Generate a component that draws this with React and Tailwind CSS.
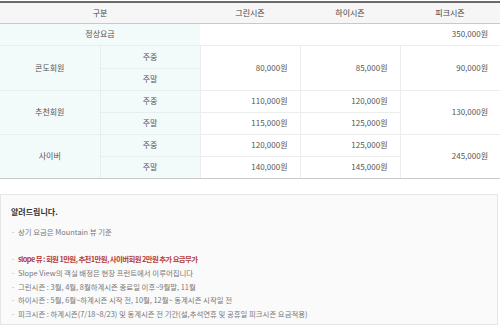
import React from 'react';

const font = { fontFamily: '"Noto Sans CJK KR", "Noto Sans", sans-serif' };

function PriceTable() {
  const th = 'font-normal text-[#444] text-[8px] text-center';
  const label = 'bg-[#f3fafa] text-center text-[#555] text-[8px] border-b border-[#e8eeee]';
  const sub = 'bg-[#f3fafa] text-center text-[#555] text-[8px] border-b border-l border-[#e6eeee]';
  const num = 'text-right pr-[12px] text-[#555] text-[8px] border-b border-l border-[#ececec]';

  return (
    <div className="pt-px">
      <table className="w-[500px] table-fixed border-collapse">
        <colgroup>
          <col className="w-[100px]" />
          <col className="w-[100px]" />
          <col className="w-[100px]" />
          <col className="w-[100px]" />
          <col className="w-[100px]" />
        </colgroup>
        <thead>
          <tr className="h-[21px] bg-[#f6f6f6] border-t-2 border-t-[#6b6b6b] border-b border-b-[#c9c9c9]">
            <th colSpan={2} className={th}>구분</th>
            <th className={th}>그린시즌</th>
            <th className={th}>하이시즌</th>
            <th className={th}>피크시즌</th>
          </tr>
        </thead>
        <tbody>
          <tr className="h-[22px]">
            <td colSpan={2} className={label}>정상요금</td>
            <td colSpan={3} className="text-right pr-[12px] text-[#555] text-[8px] border-b border-[#ececec]">350,000원</td>
          </tr>
          <tr className="h-[23px]">
            <td rowSpan={2} className={label}>콘도회원</td>
            <td className={sub}>주중</td>
            <td rowSpan={2} className={num}>80,000원</td>
            <td rowSpan={2} className={num}>85,000원</td>
            <td rowSpan={2} className={num}>90,000원</td>
          </tr>
          <tr className="h-[22px]">
            <td className={sub}>주말</td>
          </tr>
          <tr className="h-[22px]">
            <td rowSpan={2} className={label}>추천회원</td>
            <td className={sub}>주중</td>
            <td className={num}>110,000원</td>
            <td className={num}>120,000원</td>
            <td rowSpan={2} className={num}>130,000원</td>
          </tr>
          <tr className="h-[22px]">
            <td className={sub}>주말</td>
            <td className={num}>115,000원</td>
            <td className={num}>125,000원</td>
          </tr>
          <tr className="h-[22px]">
            <td rowSpan={2} className={label + ' border-b-[#c9c9c9]'}>사이버</td>
            <td className={sub}>주중</td>
            <td className={num}>120,000원</td>
            <td className={num}>125,000원</td>
            <td rowSpan={2} className={num + ' border-b-[#c9c9c9]'}>245,000원</td>
          </tr>
          <tr className="h-[22px]">
            <td className={sub + ' border-b-[#c9c9c9]'}>주말</td>
            <td className={num + ' border-b-[#c9c9c9]'}>140,000원</td>
            <td className={num + ' border-b-[#c9c9c9]'}>145,000원</td>
          </tr>
        </tbody>
      </table>
    </div>
  );
}

function Notice() {
  const items = [
    { text: '상기 요금은 Mountain 뷰 기준' },
    { text: '', blank: true },
    { text: 'slope 뷰 : 회원 1만원, 추천1만원, 사이버회원 2만원 추가 요금부가', red: true },
    { text: 'Slope View의 객실 배정은 현장 프런트에서 이루어집니다' },
    { text: '그린시즌 : 3월, 4월, 8월하계시즌 종료일 이후~9월말, 11월' },
    { text: '하이시즌 : 5월, 6월~하계시즌 시작 전, 10월, 12월~ 동계시즌 시작일 전' },
    { text: '피크시즌 : 하계시즌(7/18~8/23) 및 동계시즌 전 기간(설,추석연휴 및 공휴일 피크시즌 요금적용)' },
  ];

  return (
    <div className="mt-[15px] mr-[2px] h-[131px] border border-[#e6e6e6] bg-[#fafafa] px-[10px] pt-[10px]">
      <p className="text-[8px] font-bold text-[#333] leading-[14px]">알려드립니다.</p>
      <ul className="mt-[6px]">
        {items.map((item, i) =>
          item.blank ? (
            <li key={i} className="h-[13.8px]" />
          ) : (
            <li
              key={i}
              className={
                'flex text-[7.4px] leading-[13.8px] whitespace-nowrap ' +
                (item.red ? 'text-[#b5403a] font-semibold tracking-[-0.6px]' : 'text-[#777]')
              }
            >
              <span className="w-[7px] shrink-0 text-[#999] font-normal tracking-normal">·</span>
              <span>{item.text}</span>
            </li>
          )
        )}
      </ul>
    </div>
  );
}

export default function App() {
  return (
    <div className="w-[500px] h-[330px] bg-white overflow-hidden" style={font}>
      <PriceTable />
      <Notice />
    </div>
  );
}
